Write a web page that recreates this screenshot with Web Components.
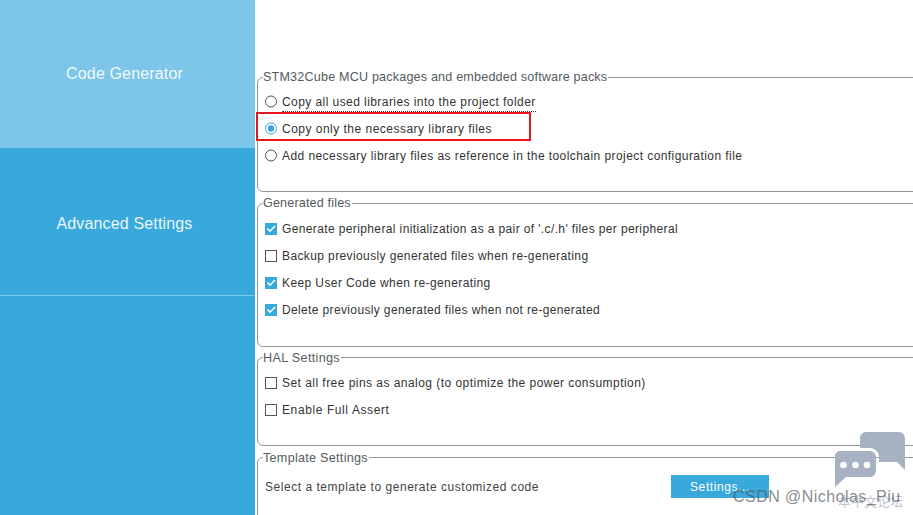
<!DOCTYPE html>
<html><head><meta charset="utf-8"><style>
html,body{margin:0;padding:0;width:913px;height:515px;overflow:hidden;background:#fff;font-family:"Liberation Sans",Arial,sans-serif}
</style></head><body>
<cube-app>
  <side-tab slot="side" active style="height:148px">Code Generator</side-tab>
  <side-tab slot="side" style="height:148px;padding-top:4px">Advanced Settings</side-tab>
  <option-group title="STM32Cube MCU packages and embedded software packs" style="height:122px;--pad:4px;--ls:.18px">
    <option-row kind="radio" dotted>Copy all used libraries into the project folder</option-row>
    <option-row kind="radio" checked marked style="--ls:.484px">Copy only the necessary library files</option-row>
    <option-row kind="radio">Add necessary library files as reference in the toolchain project configuration file</option-row>
  </option-group>
  <option-group title="Generated files" style="height:151px;margin-top:4px">
    <option-row kind="check" checked style="--ls:.376px">Generate peripheral initialization as a pair of '.c/.h' files per peripheral</option-row>
    <option-row kind="check" style="--ls:.39px">Backup previously generated files when re-generating</option-row>
    <option-row kind="check" checked style="--ls:.4px">Keep User Code when re-generating</option-row>
    <option-row kind="check" checked style="--ls:.36px">Delete previously generated files when not re-generated</option-row>
  </option-group>
  <option-group title="HAL Settings" style="height:96px;margin-top:3px;--ls:.33px;--ly:1px">
    <option-row kind="check" style="--ls:.46px">Set all free pins as analog (to optimize the power consumption)</option-row>
    <option-row kind="check" style="--ls:.6px">Enable Full Assert</option-row>
  </option-group>
  <option-group title="Template Settings" style="height:90px;margin-top:4px;--pad:9px;--ls:.28px;--ly:1px">
    <template-row>Select a template to generate customized code</template-row>
  </option-group>
  <csdn-mark slot="overlay"></csdn-mark>
</cube-app>
<script>
const def=(name,html,init)=>customElements.define(name,class extends HTMLElement{
  constructor(){super();this.attachShadow({mode:'open'}).innerHTML=html;}
  connectedCallback(){init&&init.call(this,this.shadowRoot);}
});
def('cube-app',`<style>
:host{display:flex;width:913px;height:515px;overflow:hidden;position:relative}
.side{width:255px;flex:none;background:#39a9dc;display:flex;flex-direction:column}
.main{flex:1;min-width:0;display:flex;flex-direction:column;padding:70px 0 0 2px}
</style><div class="side"><slot name="side"></slot></div><div class="main"><slot></slot></div><slot name="overlay"></slot>`);
def('side-tab',`<style>
:host{display:flex;align-items:center;justify-content:center;box-sizing:border-box;color:rgba(255,255,255,.92);font-size:16px;letter-spacing:.15px;border-bottom:1px solid #7dc5e9;padding-right:6px;background:#39a9dc}
:host([active]){background:#7dc5e9;border-bottom:0}
</style><slot></slot>`);
def('option-group',`<style>
:host{display:block;flex:none;margin-right:-30px;box-sizing:border-box;font-size:12px;color:#333}
fieldset{margin:0;box-sizing:border-box;height:100%;border:1px solid #8f969c;border-radius:6px;padding:var(--pad,5px) 0 0 7px;min-width:0}
legend{padding:0 1px 0 0;margin-left:-2px;color:#555b60;font-size:12.6px;letter-spacing:var(--ls,.16px);line-height:14px}
legend span{display:block;transform:translateY(var(--ly,0))}
.rows{display:flex;flex-direction:column;--ls:initial}
</style><fieldset><legend><span></span></legend><div class="rows"><slot></slot></div></fieldset>`,function(r){r.querySelector('span').textContent=this.getAttribute('title');});
def('option-row',`<style>
:host{display:flex;align-items:center;height:27px;gap:4px;font-size:12px;letter-spacing:var(--ls,.43px);color:#333;white-space:nowrap;position:relative}
svg{flex:none;display:block;width:13px;height:13px}
.t{position:relative;line-height:14px}
:host([dotted]) .t::after{content:"";position:absolute;left:0;right:0;bottom:-3px;border-bottom:1px dotted #333}
.m{display:none;position:absolute;left:-9px;top:-3px;width:275px;height:29px;box-sizing:border-box;border:2px solid #e8141e}
:host([marked]) .m{display:block}
</style><svg viewBox="0 0 13 13"></svg><span class="t"><slot></slot></span><div class="m"></div>`,function(r){
  const c=this.hasAttribute('checked'),s=r.querySelector('svg');
  if(this.getAttribute('kind')=='radio') s.innerHTML=`<circle cx="6" cy="6.5" r="5.5" fill="#fff" stroke="${c?'#39a9dc':'#555'}"/>`+(c?'<circle cx="6" cy="6.5" r="3.2" fill="#39a9dc"/>':'');
  else s.innerHTML=c?'<rect x="0" y="1" width="12" height="12" fill="#39a9dc"/><path d="M2.5 6.5 5 9.2 10 4" fill="none" stroke="#fff" stroke-width="1.6"/>':'<rect x=".5" y="1.5" width="11" height="11" fill="#fff" stroke="#555"/>';
});
def('template-row',`<style>
:host{display:flex;align-items:center;height:27px;font-size:12px;letter-spacing:.53px;color:#444;white-space:nowrap}
button{margin-left:132px;width:98px;height:23px;border:0;background:#39a9dc;color:#fff;font:12px "Liberation Sans",Arial,sans-serif;letter-spacing:.6px;padding:0}
</style><slot></slot><button>Settings...</button>`);
def('csdn-mark',`<style>
:host{position:absolute;left:0;top:0;width:913px;height:515px;pointer-events:none}
svg{position:absolute;left:834px;top:431px}
.a{position:absolute;left:733px;top:488px;font-size:16px;letter-spacing:.45px;color:rgba(80,85,90,.7);white-space:nowrap}
.b{position:absolute;left:838px;top:491px;font:13px "Noto Sans CJK SC",sans-serif;color:rgba(100,120,160,.45);white-space:nowrap}
</style><svg width="72" height="58" viewBox="0 0 72 58"><path d="M26 7a6 6 0 0 1 6-6h33a6 6 0 0 1 6 6v32l-8-8H45V26a9 9 0 0 0-9-9H26z" fill="#a6b2c1"/><path d="M6 20h30a6 6 0 0 1 6 6v14a6 6 0 0 1-6 6H12L1 56V25a5 5 0 0 1 5-5z" fill="#a6b2c1"/><circle cx="9.5" cy="34" r="3.3" fill="#fff"/><circle cx="21.5" cy="34" r="3.3" fill="#fff"/><circle cx="33" cy="34" r="3.3" fill="#fff"/></svg><div class="b">本中文论坛</div><div class="a">CSDN @Nicholas_Piu</div>`);
</script></body></html>
